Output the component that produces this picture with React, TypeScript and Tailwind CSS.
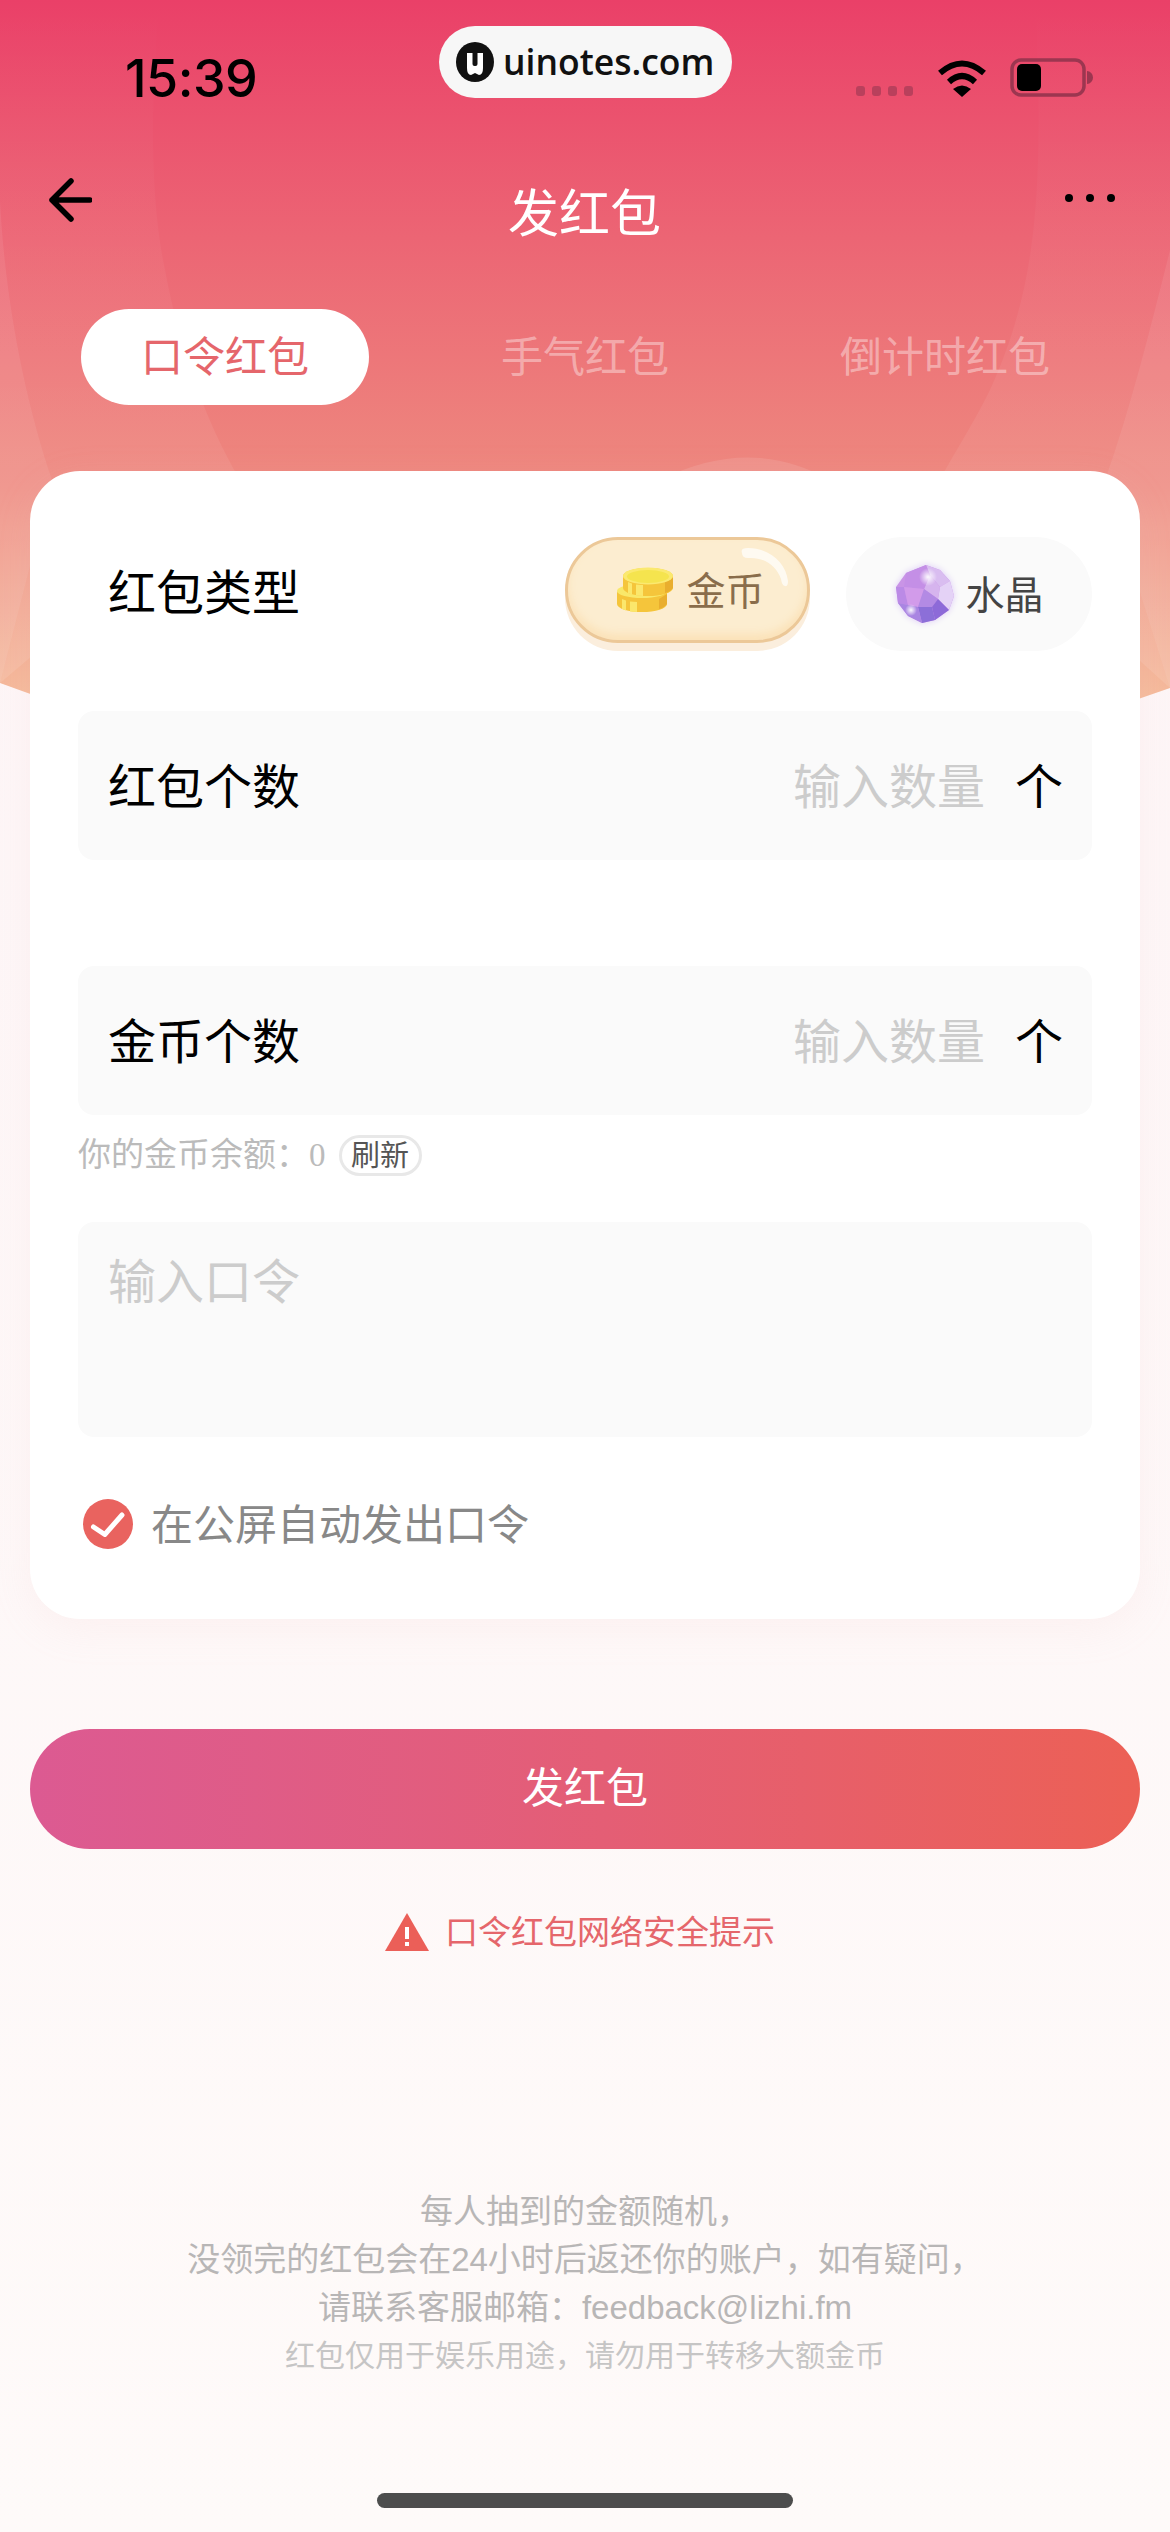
const Coins = () => (
  <svg width="58" height="47" viewBox="0 0 58 47">
    <path d="M1 26 a25 8 0 0 1 50 0 v11 a25 8 0 0 1 -50 0z" fill="#f5c53b" />
    <path d="M6 32 v10 l4 1.500 v-10z M14 34.500 v10 l7 .5 v-10z" fill="#fbe76c" />
    <path d="M43 32 l8 -5 v10 q-3 4 -8 5z" fill="#e9ae2e" />
    <ellipse cx="26" cy="24" rx="25" ry="7" fill="#f9e86a" />
    <path d="M7 9 a25 8 0 0 1 50 0 v12 a25 8 0 0 1 -50 0z" fill="#f5c53b" />
    <path d="M12 15 v11 l4 1.500 v-11z M20 17.500 v11 l7 .5 v-11z" fill="#fbe76c" />
    <path d="M49 15 l8 -5 v11 q-3 4 -8 5z" fill="#e9ae2e" />
    <ellipse cx="32" cy="9" rx="25" ry="8.500" fill="#fbe96f" />
    <ellipse cx="32" cy="9.500" rx="21" ry="6.500" fill="#f5e44e" />
  </svg>
);

const Gem = () => (
  <svg width="62" height="62" viewBox="0 0 62 62" className="drop-shadow-[0_0_3px_#dccbf7]">
    <defs>
      <radialGradient id="spark">
        <stop offset="0" stopColor="#fff" stopOpacity="0.95" />
        <stop offset="1" stopColor="#fff" stopOpacity="0" />
      </radialGradient>
    </defs>
    <polygon points="32,2 46,7 56,18 60,33 55,47 41,57 28,60 14,53 4,40 2,24 12,10" fill="#c994e6" />
    <polygon points="32,2 46,7 56,18 46,24 36,12" fill="#d9bdf0" />
    <polygon points="56,18 60,33 55,47 44,36 46,24" fill="#e4d2f6" />
    <polygon points="36,12 46,24 44,36 30,26" fill="#d6b4ee" />
    <polygon points="12,10 32,2 36,12 30,26 10,24" fill="#c48fe6" />
    <polygon points="2,24 10,24 14,42 4,40" fill="#bb8ae6" />
    <polygon points="10,24 30,26 24,44 14,42" fill="#d29bea" />
    <polygon points="30,26 44,36 38,44 24,44" fill="#b38ae4" />
    <polygon points="44,36 55,47 41,57 38,44" fill="#8d6ad8" />
    <polygon points="24,44 38,44 41,57 28,60" fill="#8c6fd8" />
    <polygon points="4,40 14,42 24,44 28,60 14,53" fill="#a985e2" />
    <circle cx="34" cy="14" r="9" fill="url(#spark)" />
    <circle cx="17" cy="47" r="6" fill="url(#spark)" />
  </svg>
);

const Wifi = () => (
  <svg width="50" height="38" viewBox="0 0 50 38" fill="none" stroke="#000" strokeWidth="6">
    <path d="M3 14 Q25 -5 47 14" />
    <path d="M12 23 Q25 11 38 23" />
    <path d="M16 30 Q25 23 34 30 L25 38z" fill="#000" stroke="none" />
  </svg>
);

const Battery = () => (
  <svg width="84" height="39" viewBox="0 0 84 39">
    <rect x="2" y="2" width="72" height="35" rx="9" fill="none" stroke="#9c3650" strokeWidth="3.500" />
    <rect x="7" y="6" width="24" height="27" rx="5" fill="#000" />
    <path d="M77 13 a6 6.500 0 0 1 0 13z" fill="#9c3650" />
  </svg>
);

const Logo = () => (
  <svg width="38" height="40" viewBox="0 0 38 40">
    <ellipse cx="19" cy="20" rx="19" ry="20" fill="#111" />
    <path d="M11 11 h16 v15 q0 7 -4 7 l-4 -2 l-4 2 q-4 0 -4 -7z" fill="#fff" />
    <rect x="16.500" y="9" width="5" height="15" rx="2" fill="#111" />
  </svg>
);

const Background = () => (
  <svg className="absolute left-0 top-0" width="1170" height="720" viewBox="0 0 1170 720">
    <defs>
      <linearGradient id="sky" x1="0" y1="0" x2="0" y2="1">
        <stop offset="0" stopColor="#ea4068" />
        <stop offset="0.3" stopColor="#ec6574" />
        <stop offset="0.62" stopColor="#ee8a7f" />
        <stop offset="1" stopColor="#f8d2aa" />
      </linearGradient>
      <linearGradient id="veil" x1="0" y1="0" x2="0" y2="1">
        <stop offset="0" stopColor="#fff" stopOpacity="0" />
        <stop offset="0.6" stopColor="#fff" stopOpacity="0.06" />
        <stop offset="1" stopColor="#fff" stopOpacity="0.1" />
      </linearGradient>
    </defs>
    <path d="M0 0 H1170 V688 Q585 900 0 683z" fill="url(#sky)" />
    <path d="M0 0 H160 C150 100 150 200 165 270 C180 350 205 420 240 480 L0 683z" fill="url(#veil)" />
    <path d="M1170 0 H1035 C1045 200 1035 290 990 390 C970 430 950 460 940 480 L1170 688z" fill="url(#veil)" />
    <path d="M0 200 C5 300 25 400 52 480 L0 683z" fill="#fff" fillOpacity="0.07" />
    <path d="M1170 250 C1150 330 1130 410 1105 480 L1170 688z" fill="#fff" fillOpacity="0.07" />
    <path d="M660 480 Q750 435 830 480z" fill="#fff" fillOpacity="0.1" />
  </svg>
);

const Field = ({ label }: { label: string }) => (
  <div className="flex h-[149px] items-center justify-between rounded-[16px] bg-[#fafafa] pb-[6px] pl-[30px] pr-[29px]">
    <span className="text-[48px] leading-none text-black">{label}</span>
    <div className="flex items-center gap-[30px]">
      <span className="text-[48px] leading-none text-[#cccccc]">输入数量</span>
      <span className="text-[48px] leading-none text-black">个</span>
    </div>
  </div>
);

export default function App() {
  return (
    <div
      lang="zh-CN"
      className="relative min-h-[2532px] w-[1170px] overflow-hidden bg-gradient-to-b from-[#fdf4f6] to-[#fefaf9] font-['Noto_Sans_CJK_SC',sans-serif]"
    >
      <Background />

      {/* watermark */}
      <div className="absolute left-[439px] top-[26px] z-10 flex h-[72px] w-[293px] items-center gap-[9px] rounded-full bg-[#f7f7f7] pl-[17px]">
        <Logo />
        <span className="font-['Open_Sans',sans-serif] text-[35.500px] font-semibold leading-none text-[#111]">uinotes.com</span>
      </div>

      <div className="relative">
        {/* status bar */}
        <div className="flex h-[156px] justify-between pl-[125px] pr-[76px] pt-[59px]">
          <span className="font-['Inter',sans-serif] text-[52px] font-medium leading-[39px] tracking-[-0.500px] text-black">15:39</span>
          <div className="-mt-[1px] flex h-[39px] items-end">
            <div className="mb-[1px] mr-[24px] flex gap-[7px]">
              <div className="h-[10px] w-[9px] rounded-[3px] bg-[#b9405c]" />
              <div className="h-[10px] w-[9px] rounded-[3px] bg-[#b9405c]" />
              <div className="h-[10px] w-[9px] rounded-[3px] bg-[#b9405c]" />
              <div className="h-[10px] w-[9px] rounded-[3px] bg-[#b9405c]" />
            </div>
            <div className="mr-[23px]">
              <Wifi />
            </div>
            <Battery />
          </div>
        </div>

        {/* nav */}
        <div className="flex h-[114px] items-start justify-between pl-[48px] pr-[55px]">
          <div className="w-[86px]">
            <svg className="mt-[22px]" width="44" height="44" viewBox="0 0 44 44" fill="none" stroke="#000" strokeWidth="5.500" strokeLinecap="round" strokeLinejoin="round">
              <path d="M23 3 L4 22 L23 41 M4 22 H42" />
            </svg>
          </div>
          <span className="mt-[29px] text-[51px] leading-none text-white">发红包</span>
          <div className="mt-[38px] flex w-[80px] justify-end gap-[13px]">
            <div className="h-[8px] w-[8px] rounded-full bg-black" />
            <div className="h-[8px] w-[8px] rounded-full bg-black" />
            <div className="h-[8px] w-[8px] rounded-full bg-black" />
          </div>
        </div>

        {/* tabs */}
        <div className="mt-[39px] grid grid-cols-3 px-[45px]">
          <div className="flex justify-center">
            <div className="flex h-[96px] w-[288px] items-center justify-center rounded-full bg-white pb-[6px] text-[42px] leading-none text-[#e5666b]">口令红包</div>
          </div>
          <div className="flex h-[96px] items-center justify-center pb-[6px] text-[42px] leading-none text-white/40">手气红包</div>
          <div className="flex h-[96px] items-center justify-center pb-[6px] text-[42px] leading-none text-white/40">倒计时红包</div>
        </div>

        <div className="mt-[66px] px-[30px]">
          {/* card */}
          <div className="rounded-[50px] bg-white px-[48px] pb-[70px] pt-[66px] shadow-[0_10px_40px_rgba(240,190,190,0.12)]">
            <div className="flex items-start justify-between pl-[30px]">
              <span className="mt-[28px] text-[48px] leading-none text-black">红包类型</span>
              <div className="flex gap-[36px]">
                <div className="relative mb-[8px] flex h-[106px] w-[245px] items-center justify-center gap-[12px] rounded-full border-[3px] border-[#ecc898] bg-[#fcedd0] pl-[6px] shadow-[0_8px_0_#fbeedd,inset_0_-6px_8px_#fbe2b8]">
                  <Coins />
                  <span className="pb-[4px] text-[39px] leading-none text-[#8a6d4b]">金币</span>
                  <svg className="absolute right-[15px] top-[5px]" width="54" height="44" viewBox="0 0 54 44">
                    <path d="M4 8 Q2 3 10 3 C32 3 48 18 50 36 Q50 42 47 41 Q44 41 43 34 C38 20 26 12 10 13 Q4 13 4 8z" fill="#fff" fillOpacity="0.7" />
                  </svg>
                </div>
                <div className="flex h-[114px] w-[246px] items-center justify-center gap-[9px] rounded-full bg-[#fafafa]">
                  <Gem />
                  <span className="pb-[4px] text-[39px] leading-none text-[#444444]">水晶</span>
                </div>
              </div>
            </div>

            <div className="mt-[60px]">
              <Field label="红包个数" />
            </div>
            <div className="mt-[106px]">
              <Field label="金币个数" />
            </div>

            <div className="mt-[20px] flex h-[41px] items-center text-[33px] leading-none text-[#bbbbbb]">
              <span className="pb-[6px]">你的金币余额：</span>
              <span className="font-['Liberation_Serif',serif]">0</span>
              <span className="ml-[13px] flex h-[41px] w-[83px] items-center justify-center rounded-full border-[3px] border-[#e8e8e8] pb-[4px] text-[29px] leading-none text-[#555555]">刷新</span>
            </div>

            <div className="mt-[46px] h-[215px] rounded-[16px] bg-[#fafafa] pl-[30px] pt-[32px]">
              <span className="text-[48px] leading-none text-[#cccccc]">输入口令</span>
            </div>

            <div className="ml-[5px] mt-[62px] flex h-[50px] items-center gap-[18px]">
              <svg width="50" height="50" viewBox="0 0 50 50">
                <circle cx="25" cy="25" r="25" fill="#e9635f" />
                <path d="M10.500 28 L21.800 35.500 L39 16" fill="none" stroke="#fff" strokeWidth="5" strokeLinecap="round" strokeLinejoin="round" />
              </svg>
              <span className="pb-[4px] text-[42px] leading-none text-[#888888]">在公屏自动发出口令</span>
            </div>
          </div>

          <button className="mt-[110px] flex h-[120px] w-full items-center justify-center rounded-full bg-gradient-to-r from-[#dc5a92] to-[#ec6055] pb-[8px] text-[42px] leading-none text-white">
            发红包
          </button>
        </div>

        {/* notice */}
        <div className="mt-[64px] flex h-[38px] items-center justify-center gap-[16px] pr-[10px]">
          <svg width="44" height="38" viewBox="0 0 44 38">
            <path d="M22 0 L44 38 H0z" fill="#eb5f58" />
            <rect x="20" y="14" width="4" height="12" fill="#fff" />
            <rect x="20" y="29" width="4" height="4" fill="#fff" />
          </svg>
          <span className="pb-[4px] text-[33px] leading-none text-[#e5666b]">口令红包网络安全提示</span>
        </div>

        {/* footer */}
        <div className="mt-[237px] text-center font-['Liberation_Sans','Noto_Sans_CJK_SC',sans-serif] text-[33px] leading-[48px] text-[#b8b6b6]">
          <p>每人抽到的金额随机，</p>
          <p>没领完的红包会在24小时后返还你的账户，如有疑问，</p>
          <p>请联系客服邮箱：feedback@lizhi.fm</p>
          <p className="text-[30px] text-[#c6c5c5]">红包仅用于娱乐用途，请勿用于转移大额金币</p>
        </div>

        <div className="mx-auto mt-[113px] h-[15px] w-[416px] rounded-full bg-[#4d4d4d]" />
      </div>
    </div>
  );
}
